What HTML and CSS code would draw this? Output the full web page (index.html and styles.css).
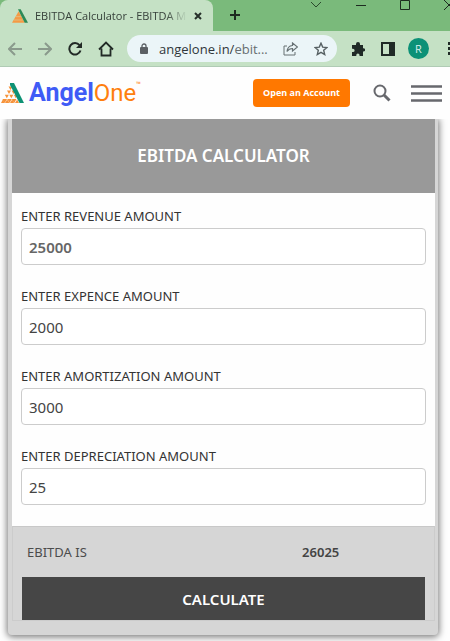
FILE: index.html
```html
<!DOCTYPE html>
<html lang="en">

<head>
    <meta charset="utf-8">
    <meta name="viewport" content="width=device-width, initial-scale=1">
    <title>EBITDA Calculator</title>
    <link rel="stylesheet" href="styles.css">
</head>

<body>
    <div class="browser">
        <div class="tab-strip">
            <div class="tab">
                <svg class="tab-icon" width="16" height="16" viewBox="0 0 24 22">
                    <path d="M10 4L0 21H19Z" fill="#f59a45" />
                    <path d="M6 12H14M3 17H16" stroke="#d9cf9c" stroke-width="1" />
                    <path d="M9 1h4L24 21h-5Z" fill="#2d8a57" />
                </svg>
                <span class="tab-title">EBITDA Calculator - EBITDA M</span>
                <button class="icon-button" aria-label="Close tab">
                    <svg width="8" height="8" viewBox="0 0 8 8"><path d="M1 1l6 6M7 1L1 7" stroke="#26302a" stroke-width="2" /></svg>
                </button>
            </div>
            <button class="icon-button new-tab" aria-label="New tab">
                <svg width="12" height="12" viewBox="0 0 12 12"><path d="M6 1v10M1 6h10" stroke="#1d2b20" stroke-width="2" /></svg>
            </button>
            <div class="window-controls">
                <button class="icon-button" aria-label="Search tabs">
                    <svg width="12" height="10" viewBox="0 0 12 10"><path d="M1 2l5 5 5-5" fill="none" stroke="#2b4a2d" stroke-width="1" /></svg>
                </button>
                <button class="icon-button" aria-label="Minimize">
                    <svg width="10" height="10" viewBox="0 0 10 10"><path d="M0 5.5h10" stroke="#1d2b20" stroke-width="1" /></svg>
                </button>
                <button class="icon-button" aria-label="Maximize">
                    <svg width="10" height="10" viewBox="0 0 10 10"><path d="M.5 .5h9v9h-9z" fill="none" stroke="#1d2b20" stroke-width="1" /></svg>
                </button>
                <button class="icon-button" aria-label="Close window">
                    <svg width="10" height="10" viewBox="0 0 10 10"><path d="M0 0l10 10M10 0L0 10" stroke="#1d2b20" stroke-width="1" /></svg>
                </button>
            </div>
        </div>

        <div class="toolbar">
            <button class="icon-button" aria-label="Back">
                <svg width="14" height="14" viewBox="0 0 14 14"><path d="M14 7H1.500M7 1L1 7l6 6" fill="none" stroke="#8a9a8c" stroke-width="2" /></svg>
            </button>
            <button class="icon-button" aria-label="Forward">
                <svg width="14" height="14" viewBox="0 0 14 14"><path d="M0 7h12.500M7 1l6 6-6 6" fill="none" stroke="#8a9a8c" stroke-width="2" /></svg>
            </button>
            <button class="icon-button" aria-label="Reload">
                <svg width="14" height="14" viewBox="0 0 14 14">
                    <path d="M11.500 3.200A5.700 5.700 0 1 0 12.500 8.500" fill="none" stroke="#222a26" stroke-width="2" />
                    <path d="M14 0v6H8z" fill="#222a26" />
                </svg>
            </button>
            <button class="icon-button" aria-label="Home">
                <svg width="16" height="16" viewBox="0 0 16 16"><path d="M1 8.500l7-7 7 7M3.500 7.500V14.500h9V7.500" fill="none" stroke="#222a26" stroke-width="1.800" /></svg>
            </button>
            <div class="address-bar">
                <svg width="8" height="11" viewBox="0 0 8 11">
                    <rect y="4" width="8" height="7" rx="1" fill="#5b6064" />
                    <path d="M2 5V3a2 2 0 0 1 4 0v2" fill="none" stroke="#5b6064" stroke-width="1.300" />
                </svg>
                <span class="address">angelone.in/<span class="address-path">ebit...</span></span>
                <div class="address-actions">
                    <button class="icon-button" aria-label="Share">
                        <svg width="15" height="14" viewBox="0 0 15 14">
                            <path d="M4 4H1v9h11v-3" fill="none" stroke="#667073" />
                            <path d="M9.500 1l5 4-5 4V6.500Q6 6.500 4 9.500 4.500 4 9.500 3.500Z" fill="none" stroke="#667073" stroke-width="1.200" />
                        </svg>
                    </button>
                    <button class="icon-button" aria-label="Bookmark">
                        <svg width="14" height="14" viewBox="0 0 14 14"><path d="M7 1.200l1.700 3.900 4.200.4-3.200 2.800 1 4.200L7 10.300l-3.700 2.200 1-4.200L1.100 5.500l4.200-.4z" fill="none" stroke="#566063" stroke-width="1.400" /></svg>
                    </button>
                </div>
            </div>
            <div class="extensions">
                <button class="icon-button" aria-label="Extensions">
                    <svg width="14" height="14" viewBox="0 0 14 14"><path d="M1 3h4V2a2 2 0 0 1 4 0v1h3v3.200h.5a1.500 1.500 0 0 1 0 3.400H12V14H8.500v-1a1.600 1.600 0 0 0-3.200 0v1H1v-4h1a1.600 1.600 0 0 0 0-3.200H1z" fill="#1f2a26" /></svg>
                </button>
                <button class="icon-button" aria-label="Side panel">
                    <svg width="14" height="14" viewBox="0 0 14 14"><path d="M1 1h12v12H1z" fill="none" stroke="#1f2a26" stroke-width="2" /><path d="M8 1h5v12H8z" fill="#1f2a26" /></svg>
                </button>
                <button class="profile" aria-label="Profile">R</button>
                <button class="icon-button" aria-label="Menu">
                    <svg width="3" height="13" viewBox="0 0 3 13"><path d="M0 0h3v3H0zM0 5h3v3H0zM0 10h3v3H0z" fill="#1f2a26" /></svg>
                </button>
            </div>
        </div>
    </div>

    <header class="site-header">
        <a class="logo" href="#">
            <svg width="24" height="22" viewBox="0 0 24 22">
                <path d="M7.500 4.500h4l-2 3.500zM6 8.500h4l-2 3.500zM10.500 8.500h4l-2 3.500zM3.800 12.700h4l-2 3.500zM8.300 12.700h4l-2 3.500zM12.800 12.700h4l-2 3.500zM1.500 17h4.500l-2.300 4zM6.300 17h4.500l-2.300 4zM11 17h4.500l-2.300 4zM0 21l1.800-3.500L3.500 21zM4 21l2.200-3.500L8.300 21zM9 21l2.200-3.500L13 21zM14 21l2.200-3.500L18 21z" fill="#f79238" />
                <path d="M9 1h4l10 20h-4.500L9 3z" fill="#0e9275" />
            </svg>
            <span class="logo-text">Angel<span class="logo-one">One</span></span><span class="logo-tm">™</span>
        </a>
        <a class="open-account" href="#">Open an Account</a>
        <button class="icon-button search" aria-label="Search">
            <svg width="18" height="18" viewBox="0 0 18 18">
                <circle cx="7" cy="7" r="5.500" fill="none" stroke="#67686d" stroke-width="2" />
                <path d="M11 11l5.500 5.500" stroke="#67686d" stroke-width="3" />
            </svg>
        </button>
        <button class="icon-button" aria-label="Open menu">
            <svg width="31" height="17" viewBox="0 0 31 17"><path d="M0 1.500h31M0 8.500h31M0 15.500h31" stroke="#67686d" stroke-width="2.600" /></svg>
        </button>
    </header>

    <main class="page">
        <form class="calculator" id="calculator">
            <h1 class="calculator-title">EBITDA CALCULATOR</h1>
            <div class="fields">
                <div class="field">
                    <label for="revenue">ENTER REVENUE AMOUNT</label>
                    <input class="strong" id="revenue" type="text" inputmode="numeric" value="25000">
                </div>
                <div class="field">
                    <label for="expense">ENTER EXPENCE AMOUNT</label>
                    <input id="expense" type="text" inputmode="numeric" value="2000">
                </div>
                <div class="field">
                    <label for="amortization">ENTER AMORTIZATION AMOUNT</label>
                    <input id="amortization" type="text" inputmode="numeric" value="3000">
                </div>
                <div class="field">
                    <label for="depreciation">ENTER DEPRECIATION AMOUNT</label>
                    <input id="depreciation" type="text" inputmode="numeric" value="25">
                </div>
            </div>
            <div class="results">
                <div class="result-row">
                    <span>EBITDA IS</span>
                    <output id="result" for="revenue expense amortization depreciation">26025</output>
                </div>
                <button class="calculate" type="submit">CALCULATE</button>
            </div>
        </form>
    </main>

    <script>
        const form = document.getElementById('calculator');

        function amount(id) {
            return Number(document.getElementById(id).value) || 0;
        }

        form.addEventListener('submit', function (event) {
            event.preventDefault();
            // EBITDA = revenue - expenses + amortization + depreciation
            document.getElementById('result').textContent =
                amount('revenue') - amount('expense') + amount('amortization') + amount('depreciation');
        });
    </script>
</body>

</html>
```
FILE: styles.css
```css
* {
    box-sizing: border-box;
}

body {
    margin: 0;
    background: #fefefe;
    color: #333;
    font-family: "Noto Sans", "Open Sans", sans-serif;
    overflow-x: hidden;
}

button {
    border: 0;
    padding: 0;
    font-family: inherit;
    cursor: pointer;
}

svg {
    display: block;
}

.icon-button {
    flex: none;
    background: none;
}

/* browser bar */
.browser {
    overflow: hidden;
    font-family: "Open Sans", sans-serif;
}

.tab-strip {
    display: flex;
    align-items: flex-start;
    height: 31px;
    background: #7aba7b;
}

.tab {
    display: flex;
    align-items: center;
    gap: 7px;
    width: 213px;
    height: 31px;
    padding: 0 11px 0 12px;
    border-radius: 8px 8px 0 0;
    background: #c5e1c5;
}

.tab-icon {
    flex: none;
}

.tab-title {
    flex: 1;
    white-space: nowrap;
    color: #36403a;
    font-size: 11px;
    -webkit-mask-image: linear-gradient(to right, #000 86%, transparent);
    mask-image: linear-gradient(to right, #000 86%, transparent);
}

.new-tab {
    margin: 9px 0 0 16px;
}

.window-controls {
    display: flex;
    gap: 34px;
    margin-left: auto;
    margin-right: -4px;
}

.toolbar {
    display: flex;
    align-items: center;
    gap: 16px;
    height: 36px;
    padding-left: 8px;
    border-bottom: 1px solid #b0cbb5;
    background: #c5e1c5;
}

.address-bar {
    display: flex;
    flex: 1;
    align-items: center;
    gap: 11px;
    height: 27px;
    margin: 0 -2px 0 -3px;
    padding: 0 9px 0 13px;
    border-radius: 14px;
    background: #ebf5f8;
}

.address {
    flex: 1;
    white-space: nowrap;
    color: #30363a;
    font-size: 13px;
}

.address-path {
    color: #676e70;
}

.address-actions {
    display: flex;
    gap: 16px;
}

.extensions {
    display: flex;
    align-items: center;
    gap: 16px;
    margin-right: -1px;
}

.profile {
    width: 21px;
    height: 21px;
    margin: 0 3px 0 -3px;
    border-radius: 50%;
    background: #0c9177;
    color: #d9eeee;
    font-size: 11px;
}

/* site header */
.site-header {
    display: flex;
    align-items: center;
    height: 52px;
    padding: 0 8px 0 1px;
}

.logo {
    display: flex;
    align-items: center;
    gap: 4px;
    margin-right: auto;
    text-decoration: none;
}

.logo-text {
    color: #3f5bf6;
    font-family: Roboto, sans-serif;
    font-size: 25px;
    font-weight: 700;
    line-height: 26px;
}

.logo-one {
    color: #ff7f0e;
    font-size: 24px;
    font-weight: 400;
}

.logo-tm {
    align-self: flex-start;
    margin-left: -4px;
    color: #ff7f0e;
    font-size: 6px;
    line-height: 8px;
}

.open-account {
    padding: 0 10px;
    border-radius: 4px;
    background: #ff7800;
    color: #fff;
    font-family: "Open Sans", sans-serif;
    font-size: 9px;
    font-weight: 700;
    line-height: 28px;
    text-decoration: none;
    white-space: nowrap;
}

.search {
    margin: 0 20px 0 23px;
}

/* calculator */
.page {
    padding: 0 12px 7px 8px;
}

.calculator {
    padding: 0 3px 14px 4px;
    border-radius: 0 0 4px 4px;
    background: #d6d6d6;
    box-shadow: 0 1px 7px 1px #777;
    clip-path: inset(0 -12px -12px -12px);
}

.calculator-title {
    margin: 0;
    background: #999;
    color: #fff;
    font-size: 17px;
    font-weight: 600;
    line-height: 74px;
    text-align: center;
}

.fields {
    display: flex;
    flex-direction: column;
    gap: 21px;
    padding: 13px 9px 21px;
    background: #fefefe;
}

.field {
    display: flex;
    flex-direction: column;
    gap: 2px;
}

.field label {
    font-size: 13px;
    line-height: 20px;
}

.field input {
    width: 100%;
    height: 37px;
    padding: 0 7px;
    border: 1px solid #ccc;
    border-radius: 4px;
    background: #fff;
    color: #444;
    font-family: inherit;
    font-size: 15px;
}

.field .strong {
    color: #666;
    font-weight: 600;
}

.results {
    padding: 0 9px;
    border: 1px solid #ccc;
    border-top-color: #c8c8c8;
}

.result-row {
    display: grid;
    grid-template-columns: 70% 1fr;
    padding: 0 5px;
    font-size: 13px;
    line-height: 50px;
    color: #4c4c4c;
}

.result-row output {
    color: #444;
    font-weight: 600;
}

.calculate {
    display: block;
    width: 100%;
    height: 43px;
    background: #464646;
    color: #fff;
    font-size: 15px;
    font-weight: 600;
}
```
